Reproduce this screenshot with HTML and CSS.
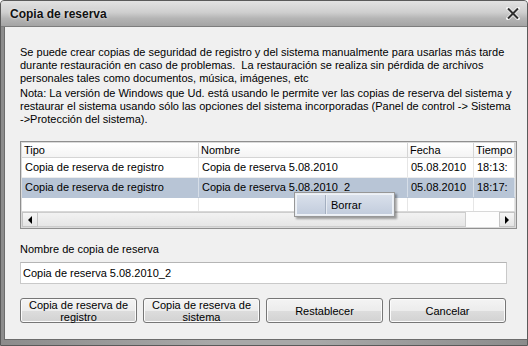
FILE: index.html
```html
<!DOCTYPE html>
<html lang="es">

<head>
    <meta charset="UTF-8">
    <title>Copia de reserva</title>
    <link rel="stylesheet" href="styles.css">
</head>

<body>
    <div class="window">
        <div class="titlebar">
            <span class="title">Copia de reserva</span>
            <svg class="close" width="14" height="13" viewBox="0 0 14 13">
                <path d="M2 1.5 L12 11.5 M12 1.5 L2 11.5" stroke="#f4f4f4" stroke-width="3.6" stroke-linecap="square" />
                <path d="M2 1.5 L12 11.5 M12 1.5 L2 11.5" stroke="#303030" stroke-width="2" />
            </svg>
        </div>
        <div class="frame">
            <div class="content">
                <p class="intro">Se puede crear copias de seguridad de registro y del sistema manualmente para usarlas más tarde<br>durante restauración en caso de problemas.&nbsp; La restauración se realiza sin pérdida de archivos<br>personales tales como documentos, música, imágenes, etc</p>
                <p class="intro">Nota: La versión de Windows que Ud. está usando le permite ver las copias de reserva del sistema y<br>restaurar el sistema usando sólo las opciones del sistema incorporadas (Panel de control -&gt; Sistema<br>-&gt;Protección del sistema).</p>

                <div class="grid">
                    <div class="grid-head">
                        <div class="cell">Tipo</div>
                        <div class="cell">Nombre</div>
                        <div class="cell">Fecha</div>
                        <div class="cell">Tiempo</div>
                    </div>
                    <div class="grid-row">
                        <div class="cell">Copia de reserva de registro</div>
                        <div class="cell">Copia de reserva 5.08.2010</div>
                        <div class="cell">05.08.2010</div>
                        <div class="cell">18:13:</div>
                    </div>
                    <div class="grid-row selected">
                        <div class="cell">Copia de reserva de registro</div>
                        <div class="cell">Copia de reserva 5.08.2010_2</div>
                        <div class="cell">05.08.2010</div>
                        <div class="cell">18:17:</div>
                    </div>
                    <div class="grid-row empty">
                        <div class="cell"></div>
                        <div class="cell"></div>
                        <div class="cell"></div>
                        <div class="cell"></div>
                    </div>
                    <div class="hscroll">
                        <div class="sb-btn"><span class="arrow left"></span></div>
                        <div class="sb-thumb"></div>
                        <div class="sb-track"></div>
                        <div class="sb-btn"><span class="arrow right"></span></div>
                    </div>

                    <div class="menu">
                        <div class="menu-item">
                            <span class="menu-icon"></span>
                            <span class="menu-text">Borrar</span>
                        </div>
                    </div>
                </div>

                <label class="field-label" for="backupName">Nombre de copia de reserva</label>
                <input class="field" id="backupName" type="text" value="Copia de reserva 5.08.2010_2">

                <div class="buttons">
                    <button class="btn">Copia de reserva de<br>registro</button>
                    <button class="btn">Copia de reserva de<br>sistema</button>
                    <button class="btn">Restablecer</button>
                    <button class="btn">Cancelar</button>
                </div>
            </div>
        </div>
    </div>
</body>

</html>
```

FILE: styles.css
```css
* {
    box-sizing: border-box;
}

body {
    margin: 0;
    font-family: 'Liberation Sans', Arial, sans-serif;
    font-size: 11px;
    color: #000;
    background-color: #ffffff;
}

.window {
    width: 528px;
    height: 346px;
    display: flex;
    flex-direction: column;
    border: 1px solid #5a5a5a;
    border-radius: 4px 4px 0 0;
    background-color: #a3a3a3;
    overflow: hidden;
}

.titlebar {
    height: 26px;
    flex-shrink: 0;
    display: flex;
    align-items: center;
    padding: 0 7px 0 9px;
    background: linear-gradient(#e2e2e2, #cfcfcf 45%, #b4b4b4 70%, #a4a4a4);
    border-bottom: 1px solid #7d7d7d;
}

.title {
    font-size: 12px;
    font-weight: bold;
    color: #111;
    text-shadow: 0 0 3px #f2f2f2;
}

.close {
    margin-left: auto;
}

.frame {
    flex: 1;
    display: flex;
    padding: 0 4px 5px 3px;
    background: linear-gradient(90deg, #8c8c8c, #a8a8a8 40%, #a8a8a8 60%, #8c8c8c);
}

.content {
    flex: 1;
    background-color: #f0f0f0;
    border: 1px solid #6c6c6c;
    border-top: none;
    padding: 19px 15px 0 15px;
}

.intro {
    margin: 0 0 2px 0;
    line-height: 13px;
    white-space: nowrap;
}

.grid {
    position: relative;
    margin-top: 15px;
    height: 88px;
    border: 1px solid #8f8f8f;
    box-shadow: inset 0 0 0 1px #dadada;
    background-color: #ffffff;
    display: flex;
    flex-direction: column;
}

.grid-head,
.grid-row {
    display: grid;
    grid-template-columns: 177px 209px 66px 1fr;
    overflow: hidden;
}

.grid-head {
    height: 15px;
    line-height: 14px;
    background: linear-gradient(#ffffff, #f4f4f4);
    border-bottom: 1px solid #d5d5d5;
    margin: 1px 1px 0 1px;
}

.grid-head .cell {
    border-right: 1px solid #d5d5d5;
    padding: 0 2px;
}

.grid-row {
    height: 20px;
    line-height: 19px;
    margin: 0 1px;
    border-bottom: 1px solid #ededed;
}

.grid-row .cell {
    border-right: 1px solid #e6e6e6;
    padding: 0 3px;
    white-space: nowrap;
    overflow: hidden;
}

.grid-row.selected {
    background-color: #b8c5d6;
    border-bottom-color: #b8c5d6;
}

.grid-row.selected .cell {
    border-right-color: #d6dee8;
}

.grid-row.empty {
    flex: 1;
    height: auto;
    border-bottom: none;
}

.hscroll {
    height: 16px;
    margin: 0 1px 1px 1px;
    display: flex;
    background-color: #ffffff;
    border-top: 1px solid #d8d8d8;
}

.sb-btn {
    width: 16px;
    display: flex;
    align-items: center;
    justify-content: center;
    background: linear-gradient(#f6f6f6, #e4e4e4);
    border: 1px solid #c4c4c4;
}

.sb-thumb {
    flex: 1;
    background: linear-gradient(#f2f2f2, #e6e6e6);
    border: 1px solid #cdcdcd;
    border-left: none;
}

.sb-track {
    width: 33px;
    background-color: #fdfdfd;
}

.arrow {
    width: 0;
    height: 0;
    border-top: 4px solid transparent;
    border-bottom: 4px solid transparent;
}

.arrow.left {
    border-right: 4px solid #000;
}

.arrow.right {
    border-left: 4px solid #000;
}

.menu {
    position: absolute;
    left: 273px;
    top: 50px;
    width: 101px;
    height: 25px;
    padding: 1px;
    background-color: #e9edf3;
    border: 1px solid #979797;
    box-shadow: 2px 2px 2px rgba(0, 0, 0, 0.35);
}

.menu-item {
    height: 100%;
    display: flex;
    align-items: center;
    background: linear-gradient(#d9e0eb, #c3cddd);
    border: 1px solid #eef2f7;
}

.menu-icon {
    width: 29px;
    height: 100%;
    border-right: 1px solid #a4afc0;
    box-shadow: 1px 0 0 #e6ebf2;
}

.menu-text {
    padding-left: 5px;
    font-size: 11px;
}

.field-label {
    display: block;
    margin-top: 14px;
    line-height: 13px;
}

.field {
    display: block;
    width: 487px;
    height: 22px;
    margin-top: 6px;
    padding: 0 2px;
    font-family: 'Liberation Sans', Arial, sans-serif;
    font-size: 11px;
    color: #000;
    background-color: #ffffff;
    border: 1px solid #c9c9c9;
    border-top-color: #b5b5b5;
    outline: none;
}

.buttons {
    display: flex;
    gap: 6px;
    margin-top: 14px;
}

.btn {
    width: 117px;
    height: 25px;
    padding: 0;
    font-family: 'Liberation Sans', Arial, sans-serif;
    font-size: 11px;
    line-height: 12px;
    color: #000;
    border: 1px solid #767676;
    border-radius: 3px;
    background: linear-gradient(#f4f4f4, #ececec 50%, #dddddd 51%, #d2d2d2);
    box-shadow: inset 0 0 0 1px #fbfbfb;
}
```
